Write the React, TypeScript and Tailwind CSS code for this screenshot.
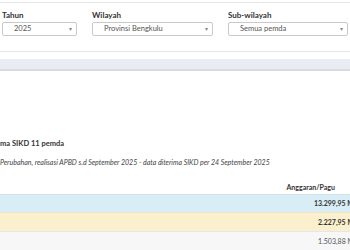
import React from "react";

// dropdown filter box
const Pilihan: React.FC<{ label: string; value: string; width: string }> = ({ label, value, width }) => {
  return (
    <div className={`flex flex-col ${width}`}>
      <span className="h-[10px] text-[8px] leading-[10px] font-bold text-[#333]">{label}</span>
      <div className="mt-[2px] flex h-[14px] items-center justify-between rounded-[2px] border border-[#c9c9c9] bg-white pl-[11px] pr-[4px]">
        <span className="text-[7.5px] leading-none text-[#555]">{value}</span>
        <span className="text-[6px] leading-none text-[#888]">▾</span>
      </div>
    </div>
  );
};

const App: React.FC = () => {
  return (
    <div
      className="h-[250px] w-[350px] overflow-hidden bg-white text-[#333]"
      style={{ fontFamily: "Lato, 'Liberation Sans', sans-serif" }}
    >
      {/* filter panel */}
      <div className="mt-[2px] border-b border-t border-[#e6e6e6] pb-[15px] pl-[2px] pt-[7px]">
        <div className="flex gap-[15px]">
          <Pilihan label="Tahun" value="2025" width="w-[75px]" />
          <Pilihan label="Wilayah" value="Provinsi Bengkulu" width="w-[121px]" />
          <Pilihan label="Sub-wilayah" value="Semua pemda" width="w-[120px]" />
        </div>
      </div>

      <div className="mt-[7px] h-[12px] border-b-2 border-[#d6dbe3] bg-[#e9edf3]" />

      {/* keterangan */}
      <div className="mt-[68px] text-[7.5px] font-bold leading-[10px]">ma SIKD 11 pemda</div>
      <div className="mt-[8px] text-[7px] italic leading-[10px] text-[#444]">
        Perubahan, realisasi APBD s.d September 2025 - data diterima SIKD per 24 September 2025
      </div>

      {/* tabel */}
      <div className="mt-[14px]">
        <div className="flex h-[13px] items-center justify-end pr-[15px] text-[7px] font-bold">Anggaran/Pagu</div>
        <div className="flex h-[18px] items-center justify-end border-t border-[#cfe3ee] bg-[#d9edf7] text-[7px] font-bold whitespace-nowrap">
          <span className="mr-[-4px]">13.299,95 M</span>
        </div>
        <div className="flex h-[19px] items-center justify-end border-t border-[#efe6c6] bg-[#faf0cd] text-[7px] font-bold whitespace-nowrap">
          <span className="mr-[-4px]">2.227,95 M</span>
        </div>
        <div className="flex h-[19px] items-center justify-end border-t border-[#e6e6e6] bg-[#f7f7f7] text-[7px] text-[#555] whitespace-nowrap">
          <span className="mr-[-4px]">1.503,88 M</span>
        </div>
      </div>
    </div>
  );
};

export default App;
